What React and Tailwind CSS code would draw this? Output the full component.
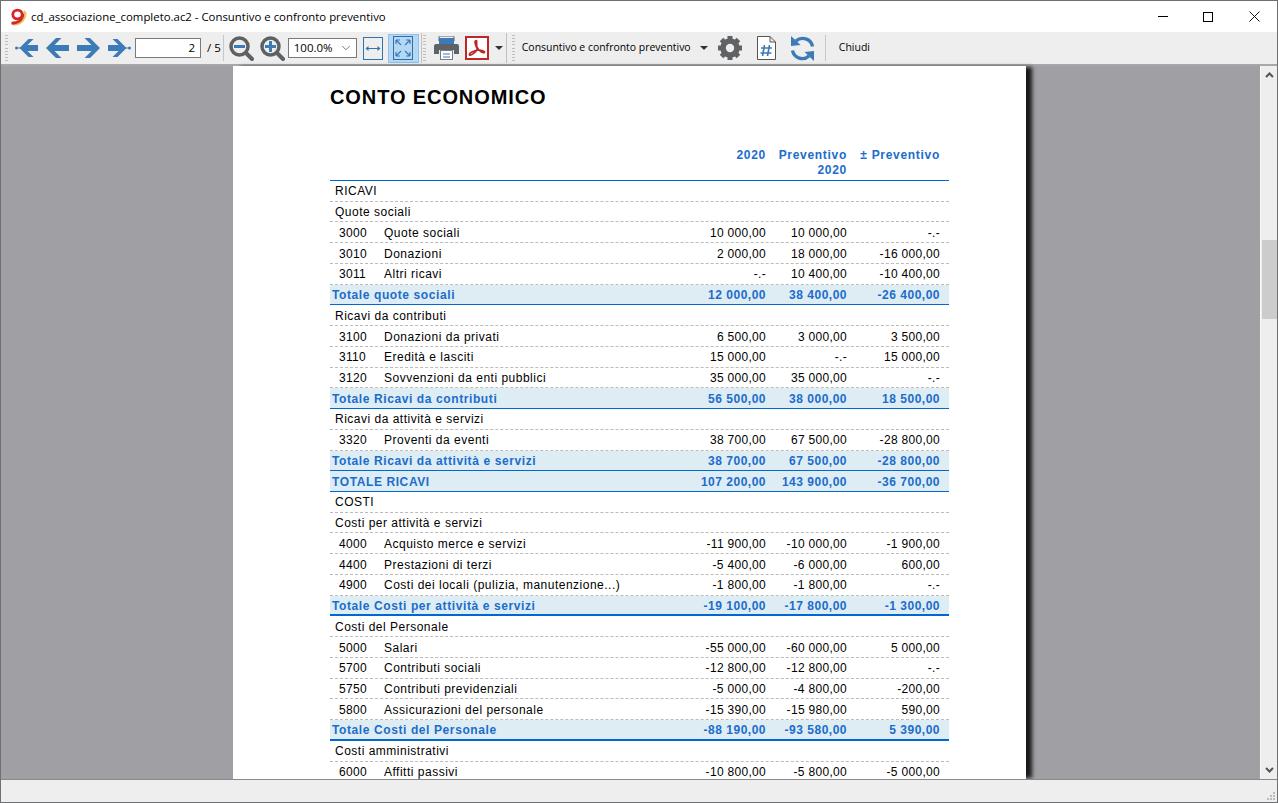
import { ChevronDown } from 'lucide-react';

const SANS = 'font-["Liberation_Sans",Arial,sans-serif]';
const UI = 'font-["Open_Sans","Noto_Sans",sans-serif]';

const ROWS = [
  { t: 'head', label: 'RICAVI' },
  { t: 'group', label: 'Quote sociali' },
  { t: 'item', no: '3000', label: 'Quote sociali', v: ['10 000,00', '10 000,00', '-.-'] },
  { t: 'item', no: '3010', label: 'Donazioni', v: ['2 000,00', '18 000,00', '-16 000,00'] },
  { t: 'item', no: '3011', label: 'Altri ricavi', v: ['-.-', '10 400,00', '-10 400,00'] },
  { t: 'total', label: 'Totale quote sociali', v: ['12 000,00', '38 400,00', '-26 400,00'] },
  { t: 'group', label: 'Ricavi da contributi' },
  { t: 'item', no: '3100', label: 'Donazioni da privati', v: ['6 500,00', '3 000,00', '3 500,00'] },
  { t: 'item', no: '3110', label: 'Eredità e lasciti', v: ['15 000,00', '-.-', '15 000,00'] },
  { t: 'item', no: '3120', label: 'Sovvenzioni da enti pubblici', v: ['35 000,00', '35 000,00', '-.-'] },
  { t: 'total', label: 'Totale Ricavi da contributi', v: ['56 500,00', '38 000,00', '18 500,00'] },
  { t: 'group', label: 'Ricavi da attività e servizi' },
  { t: 'item', no: '3320', label: 'Proventi da eventi', v: ['38 700,00', '67 500,00', '-28 800,00'] },
  { t: 'total', label: 'Totale Ricavi da attività e servizi', v: ['38 700,00', '67 500,00', '-28 800,00'] },
  { t: 'grand', label: 'TOTALE RICAVI', v: ['107 200,00', '143 900,00', '-36 700,00'] },
  { t: 'head', label: 'COSTI' },
  { t: 'group', label: 'Costi per attività e servizi' },
  { t: 'item', no: '4000', label: 'Acquisto merce e servizi', v: ['-11 900,00', '-10 000,00', '-1 900,00'] },
  { t: 'item', no: '4400', label: 'Prestazioni di terzi', v: ['-5 400,00', '-6 000,00', '600,00'] },
  { t: 'item', no: '4900', label: 'Costi dei locali (pulizia, manutenzione...)', v: ['-1 800,00', '-1 800,00', '-.-'] },
  { t: 'total2', label: 'Totale Costi per attività e servizi', v: ['-19 100,00', '-17 800,00', '-1 300,00'] },
  { t: 'group', label: 'Costi del Personale' },
  { t: 'item', no: '5000', label: 'Salari', v: ['-55 000,00', '-60 000,00', '5 000,00'] },
  { t: 'item', no: '5700', label: 'Contributi sociali', v: ['-12 800,00', '-12 800,00', '-.-'] },
  { t: 'item', no: '5750', label: 'Contributi previdenziali', v: ['-5 000,00', '-4 800,00', '-200,00'] },
  { t: 'item', no: '5800', label: 'Assicurazioni del personale', v: ['-15 390,00', '-15 980,00', '590,00'] },
  { t: 'total2', label: 'Totale Costi del Personale', v: ['-88 190,00', '-93 580,00', '5 390,00'] },
  { t: 'group', label: 'Costi amministrativi' },
  { t: 'item', no: '6000', label: 'Affitti passivi', v: ['-10 800,00', '-5 800,00', '-5 000,00'] },
];

const Arrow = ({ flip, dot }) => (
  <svg width="23" height="20" viewBox="0 0 23 20" className={flip ? '-scale-x-100' : ''}>
    {dot ? (
      <>
        <circle cx="1.5" cy="10" r="1.5" fill="#3d7ab8" />
        <path d="M1 10 H6" stroke="#3d7ab8" />
        <path d="M4.5 10 L13.5 1 L18.5 1 L12.5 7 L23 7 L23 13 L12.5 13 L18.5 19 L13.5 19 Z" fill="#3d7ab8" />
      </>
    ) : (
      <path d="M0 10 L10 0 L15.5 0 L8.5 7 L23 7 L23 13 L8.5 13 L15.5 20 L10 20 Z" fill="#3d7ab8" />
    )}
  </svg>
);

const Magnifier = ({ plus }) => (
  <svg width="25" height="25" viewBox="0 0 25 25">
    <circle cx="10.5" cy="10.5" r="8.5" fill="#eeeeee" stroke="#5e6164" strokeWidth="3.5" />
    <path d="M17 17 L23 23" stroke="#5e6164" strokeWidth="4" strokeLinecap="round" />
    <path d="M5 10.5 H16" stroke="#3d7ab8" strokeWidth="3" />
    {plus && <path d="M10.5 5 V16" stroke="#3d7ab8" strokeWidth="3" />}
  </svg>
);

const Grip = () => (
  <div className="flex h-[26px] w-[3px] flex-col justify-between">
    {Array.from({ length: 9 }).map((_, i) => (
      <div key={i} className="h-px w-[3px] bg-[#bdbdbd]" />
    ))}
  </div>
);

const Caret = () => (
  <div className="h-0 w-0 border-x-[4px] border-t-[4px] border-x-transparent border-t-[#333]" />
);

const GEAR_TEETH = [0, 45, 90, 135];

function TitleBar() {
  return (
    <div className="flex h-[31px] items-center bg-white pl-[9px]">
      <svg width="17" height="18" viewBox="0 0 17 18">
        <path d="M1 15.5 C7 16.5 12.5 12 14 2 L16.5 4.5 C17 11 11 18.5 3.5 17.5 Z" fill="#e3c65a" />
        <ellipse cx="7.5" cy="6.5" rx="4.7" ry="4.4" fill="none" stroke="#d9232b" strokeWidth="2.8" />
        <path d="M12.8 6 C12.8 11.5 8.5 15 1.5 15.2" fill="none" stroke="#d9232b" strokeWidth="2.8" />
      </svg>
      <span className={`${UI} ml-[4px] text-[11.4px] leading-none text-black`}>
        cd_associazione_completo.ac2 - Consuntivo e confronto preventivo
      </span>
      <div className="ml-auto flex items-center">
        <div className="h-px w-[10px] bg-black" />
        <div className="ml-[35px] h-[10px] w-[10px] border border-black" />
        <svg width="11" height="11" viewBox="0 0 11 11" className="ml-[36px] mr-[17px]">
          <path d="M0.5 0.5 L10.5 10.5 M10.5 0.5 L0.5 10.5" stroke="#111" strokeWidth="1" />
        </svg>
      </div>
    </div>
  );
}

function Toolbar() {
  return (
    <div className="flex h-[34px] items-center border-b-2 border-[#a8a8a8] bg-[#eeeeee] pl-[4px]">
      <Grip />
      <div className="ml-[7px] flex items-center gap-[8px]">
        <Arrow dot />
        <Arrow />
        <Arrow flip />
        <Arrow flip dot />
      </div>
      <div className={`${UI} ml-[4px] flex h-[20px] w-[66px] items-center justify-end border border-[#7a7a7a] bg-white pr-[5px] text-[11.5px] text-black`}>2</div>
      <span className={`${UI} ml-[6px] text-[11.5px] text-black`}>/ 5</span>
      <div className="ml-[2px] h-[26px] w-px bg-[#c8c8c8]" />
      <div className="ml-[5px] flex items-center gap-[6px]">
        <Magnifier />
        <Magnifier plus />
      </div>
      <div className={`${UI} ml-[3px] flex h-[20px] w-[69px] items-center justify-between border border-[#7a7a7a] bg-white pl-[5px] pr-[3px] text-[11.5px] text-black`}>
        100.0%
        <ChevronDown size={14} strokeWidth={1.2} className="text-[#444]" />
      </div>
      <svg width="20" height="23" viewBox="0 0 20 23" className="ml-[6px]">
        <rect x="0.5" y="0.5" width="19" height="22" fill="none" stroke="#2f73b0" />
        <path d="M3 11.5 H17" stroke="#2f73b0" />
        <path d="M2.5 11.5 L5.5 9 V14 Z M17.5 11.5 L14.5 9 V14 Z" fill="#2f73b0" />
      </svg>
      <div className="ml-[5px] flex h-[29px] w-[31px] items-center justify-center border border-[#8fc1ea] bg-[#b5d8f4]">
        <svg width="20" height="24" viewBox="0 0 20 24">
          <rect x="0.5" y="0.5" width="19" height="23" fill="none" stroke="#2f70a8" />
          <path d="M3 4 L8 9 M3 4 H7 M3 4 V8 M17 4 L12 9 M17 4 H13 M17 4 V8 M3 20 L8 15 M3 20 H7 M3 20 V16 M17 20 L12 15 M17 20 H13 M17 20 V16" fill="none" stroke="#3d7ab8" strokeWidth="1.2" />
        </svg>
      </div>
      <div className="ml-[2px] h-[30px] w-px bg-[#c0c0c0]" />
      <div className="ml-px"><Grip /></div>
      <svg width="25" height="24" viewBox="0 0 25 24" className="ml-[8px]">
        <path d="M5 5 V1 Q5 0 6 0 H19 Q20 0 20 1 V5 Z" fill="#eeeeee" stroke="#5e6368" />
        <rect x="5" y="2" width="15" height="6" fill="#3d7ab8" />
        <path d="M2 8 H23 Q25 8 25 10 V18 H20 V14 H5 V18 H0 V10 Q0 8 2 8 Z" fill="#5e6368" />
        <rect x="6.5" y="14.5" width="12" height="9" fill="white" stroke="#7a7d80" />
        <path d="M9 18 H16 M9 21 H16" stroke="#3d7ab8" />
      </svg>
      <svg width="24" height="24" viewBox="0 0 24 24" className="ml-[6px]">
        <rect x="1" y="1" width="22" height="22" fill="white" stroke="#c02528" strokeWidth="2" />
        <path d="M11 4.5 C9 4.5 10.5 10 12.5 13 C10.5 16.5 6 20 4.5 19 C3.5 17 10 14 14 14 C16.5 14 20 15 19.5 16.5 C18 17.5 13.5 14.5 12 11 C11 8 12.5 4.5 11 4.5 Z" fill="none" stroke="#c02528" strokeWidth="1.7" />
      </svg>
      <div className="ml-[6px]"><Caret /></div>
      <div className="ml-[3px] h-[30px] w-px bg-[#c0c0c0]" />
      <div className="ml-[5px]"><Grip /></div>
      <span className={`${UI} ml-[7px] w-[170px] whitespace-nowrap text-[10.45px] text-black`}>Consuntivo e confronto preventivo</span>
      <div className="ml-[8px]"><Caret /></div>
      <svg width="24" height="24" viewBox="0 0 24 24" className="ml-[10px]">
        <circle cx="12" cy="12" r="7" fill="none" stroke="#606366" strokeWidth="5.5" />
        {GEAR_TEETH.map((a) => (
          <rect key={a} x="9.5" y="0" width="5" height="24" fill="#606366" transform={`rotate(${a} 12 12)`} />
        ))}
        <circle cx="12" cy="12" r="4.2" fill="#eeeeee" />
      </svg>
      <svg width="19" height="24" viewBox="0 0 19 24" className="ml-[15px]">
        <path d="M0.5 0.5 H13 L18.5 6 V23.5 H0.5 Z M13 0.5 V6 H18.5" fill="white" stroke="#555" />
        <path d="M7.5 9 L5.5 20 M12.5 9 L10.5 20 M4 12 H15 M3.5 17 H14.5" fill="none" stroke="#3d7ab8" strokeWidth="1.6" />
      </svg>
      <svg width="25" height="25" viewBox="0 0 25 25" className="ml-[14px]">
        <path d="M22.5 10.5 A10 10 0 0 0 6 5" fill="none" stroke="#3d7ab8" strokeWidth="3.4" />
        <path d="M2.5 14.5 A10 10 0 0 0 19 20" fill="none" stroke="#3d7ab8" strokeWidth="3.4" />
        <path d="M1 0 L1 10 L10.5 9 Z" fill="#3d7ab8" />
        <path d="M24 25 L24 15 L14.5 16 Z" fill="#3d7ab8" />
      </svg>
      <div className="ml-[10px] h-[26px] w-px bg-[#c8c8c8]" />
      <span className={`${UI} ml-[13px] text-[10.5px] text-black`}>Chiudi</span>
    </div>
  );
}

function Row({ row }) {
  const isTotal = row.t === 'total' || row.t === 'total2' || row.t === 'grand';
  const base = 'flex h-[20.74px] items-center whitespace-nowrap pt-px text-[12px]';
  const border = isTotal
    ? row.t === 'total2'
      ? 'border-b-2 border-[#0068d0]'
      : 'border-b border-[#0068d0]'
    : 'border-b border-dashed border-[#bbbbbb]';
  const color = isTotal ? 'bg-[#deecf4] font-bold text-[#1a6dcc]' : 'text-black';
  const labelTrack = isTotal ? 'tracking-[0.6px]' : 'tracking-[0.5px]';
  const numTrack = isTotal ? 'tracking-[0.5px]' : 'tracking-[0.3px]';
  return (
    <div className={`${base} ${border} ${color}`}>
      {row.t === 'item' ? (
        <>
          <span className={`ml-[9px] w-[45px] ${numTrack}`}>{row.no}</span>
          <span className={labelTrack}>{row.label}</span>
        </>
      ) : (
        <span className={`${isTotal ? 'ml-[2px]' : 'ml-[5px]'} ${labelTrack}`}>
          {row.label}
        </span>
      )}
      {row.v && (
        <div className={`ml-auto flex ${numTrack}`}>
          <span className="text-right">{row.v[0]}</span>
          <span className="w-[81px] text-right">{row.v[1]}</span>
          <span className="mr-[9px] w-[93px] text-right">{row.v[2]}</span>
        </div>
      )}
    </div>
  );
}

function Page() {
  return (
    <div className={`${SANS} ml-[232px] h-full w-[793px] shrink-0 overflow-hidden bg-white pl-[97px] pr-[77px] shadow-[7px_0_4px_-1px_rgba(0,0,0,0.85)]`}>
      <h1 className="mt-[17px] h-[28px] text-[20px] font-bold leading-[28px] tracking-[0.9px] text-black">CONTO ECONOMICO</h1>
      <div className="mt-[35px] flex h-[35px] justify-end border-b border-[#0068d0] pt-[2px] text-[12px] font-bold leading-[15px] tracking-[0.7px] text-[#1a6dcc]">
        <span>2020</span>
        <span className="w-[81px] text-right">Preventivo<br />2020</span>
        <span className="mr-[9px] w-[93px] text-right">± Preventivo</span>
      </div>
      {ROWS.map((r, i) => (
        <Row key={i} row={r} />
      ))}
    </div>
  );
}

function Scrollbar() {
  return (
    <div className="ml-auto flex h-full w-[17px] shrink-0 flex-col items-center border-l border-[#f8f8f8] bg-[#eeeeee] pt-[6px]">
      <svg width="9" height="6" viewBox="0 0 9 6">
        <path d="M1 5 L4.5 1.5 L8 5" fill="none" stroke="#555" strokeWidth="2" />
      </svg>
      <div className="mt-[162px] h-[79px] w-[15px] bg-[#cccccc]" />
      <svg width="9" height="6" viewBox="0 0 9 6" className="mt-auto mb-[6px]">
        <path d="M1 1 L4.5 4.5 L8 1" fill="none" stroke="#555" strokeWidth="2" />
      </svg>
    </div>
  );
}

export default function App() {
  return (
    <div className="flex h-[803px] w-[1278px] flex-col overflow-hidden border border-[#6f7072] bg-white">
      <TitleBar />
      <Toolbar />
      <div className="flex min-h-0 flex-1 bg-[#a0a0a4]">
        <Page />
        <Scrollbar />
      </div>
      <div className="flex h-[23px] items-end justify-end border-t border-[#8a8a8a] bg-[#eeeeee] pb-[2px] pr-[2px]">
        <svg width="8" height="8" viewBox="0 0 8 8">
          <path d="M6 0h2v2H6zM3 3h2v2H3zM6 3h2v2H6zM0 6h2v2H0zM3 6h2v2H3zM6 6h2v2H6z" fill="#bbbbbb" />
        </svg>
      </div>
    </div>
  );
}
